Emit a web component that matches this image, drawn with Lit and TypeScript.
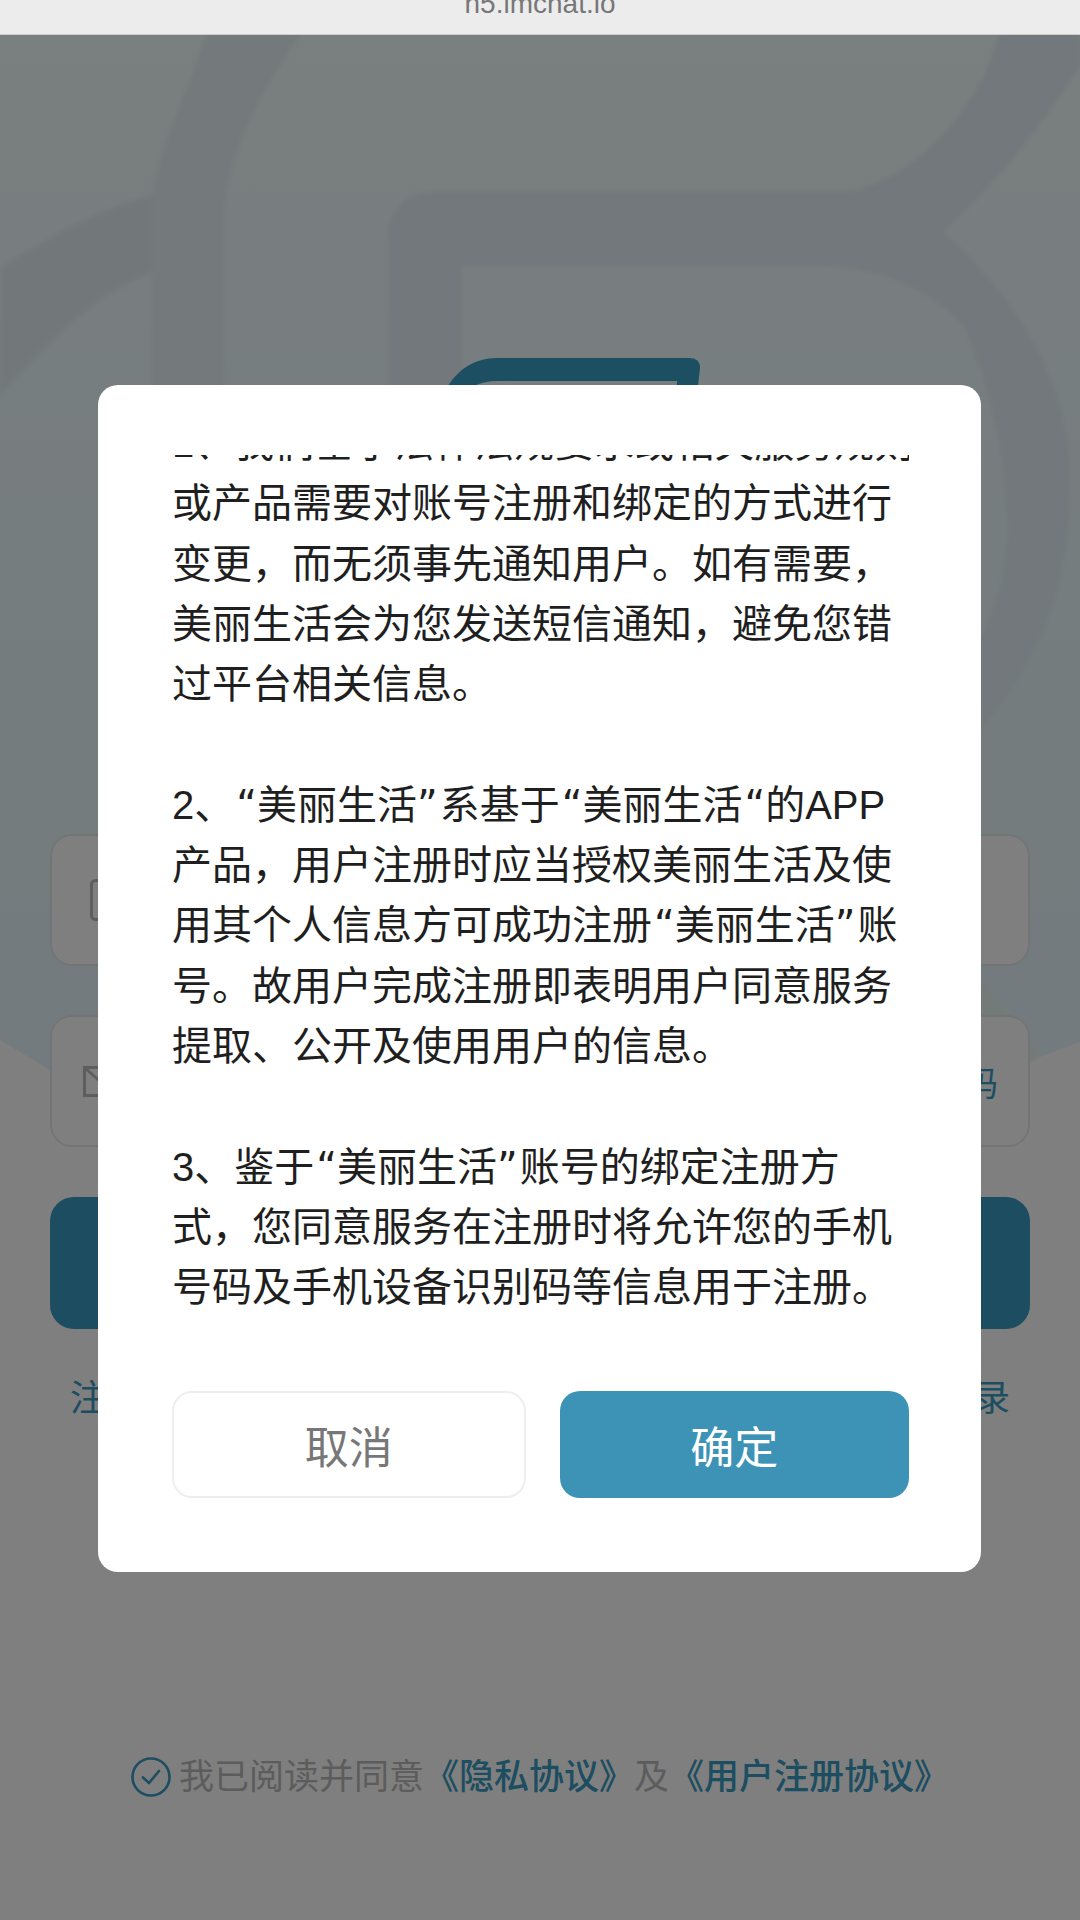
import { LitElement, html, css, svg } from "lit";
import { customElement } from "lit/decorators.js";

@customElement("app-root")
export class AppRoot extends LitElement {
  static styles = css`
    :host { display: block; font-family: "Liberation Sans", "Noto Sans CJK SC", sans-serif; }
    * { box-sizing: border-box; }
    .page { position: relative; width: 1080px; height: 1920px; overflow: hidden; background: #fff; }
    .bg { position: absolute; left: 0; top: 0; width: 1080px; height: 1920px; z-index: 0; }
    .bar { position: relative; z-index: 3; height: 35px; background: #ececec; border-bottom: 1px solid #c9cdcd; overflow: hidden; text-align: center; }
    .bar span { display: block; margin-top: -10px; font-size: 28px; line-height: 28px; color: #777; }
    .main { position: relative; z-index: 1; padding: 799px 50px 0; display: flex; flex-direction: column; }
    .field { height: 132px; background: #fff; border: 2px solid #e6eaea; border-radius: 22px; display: flex; align-items: center; padding: 0 30px 0 31px; gap: 20px; }
    .field + .field { margin-top: 49px; }
    .icon { width: 38px; display: flex; justify-content: center; flex: none; }
    .ph { flex: 1; font-size: 34px; color: #bbb; }
    .code { font-size: 34px; color: #3a9ac0; }
    .submit { margin-top: 50px; height: 132px; border-radius: 24px; background: #3a9ac0; color: #fff; font-size: 40px; display: flex; align-items: center; justify-content: center; }
    .links { margin-top: 48px; padding: 0 20px; display: flex; justify-content: space-between; font-size: 36px; line-height: 44px; color: #3a9ac0; }
    .agree { margin-top: 334px; display: flex; align-items: center; justify-content: center; gap: 8px; font-size: 35px; line-height: 44px; color: #b9b9b9; white-space: nowrap; }
    .agree b { font-weight: 500; color: #3a9ac0; }
    .agree svg { flex: none; }
    .overlay { position: absolute; z-index: 2; left: 0; right: 0; top: 35px; bottom: 0; background: rgba(0, 0, 0, 0.5); padding: 350px 99px 0 98px; }
    .dialog { height: 1187px; background: #fff; border-radius: 20px; padding: 70px 72px 74px 74px; display: flex; flex-direction: column; }
    .scroll { flex: 1; overflow: hidden; }
    .text { margin-top: -42px; font-size: 40px; line-height: 60.3px; color: #1f1f1f; white-space: nowrap; }
    .text p { margin: 0 0 60.3px; }
    .qo, .qc { font-family: "DejaVu Sans", sans-serif; }
    .qo { padding-left: 2px; }
    .qc { padding-right: 2px; }
    .btns { display: flex; gap: 34px; }
    .btn { flex: 1; height: 107px; border-radius: 20px; font-size: 44px; display: flex; align-items: center; justify-content: center; }
    .cancel { border: 2px solid #eeeeee; color: #777; background: #fff; }
    .ok { background: #3d93b6; color: #fff; }
  `;

  private background() {
    return svg`
      <defs>
        <linearGradient id="base" x1="0" y1="0" x2="0" y2="1">
          <stop offset="0" stop-color="#f4ffff" />
          <stop offset="1" stop-color="#e6f6fc" />
        </linearGradient>
        <filter id="soft" x="-5%" y="-5%" width="110%" height="110%"><feGaussianBlur stdDeviation="2.5" /></filter>
      </defs>
      <path d="M0 0H1080V1042L1040 1057L980 1085H100L50 1070L0 1040Z" fill="url(#base)" />
      <g filter="url(#soft)">
        <path d="M207 30C190 90 160 140 152 200V1085H224V220C224 150 270 80 303 30Z" fill="#e8f2f7" />
        <path d="M0 268C50 235 100 209 152 195V273C100 290 50 340 0 395Z" fill="#e5f0f5" />
        <path d="M389 1085V240Q389 192 437 192H847C920 180 985 100 1000 30H1080V65C1045 120 1000 180 943 232C1030 310 1072 400 1070 486C1068 590 1040 660 980 730L900 800V600L980 640C1000 600 1010 560 1007 521C1005 440 985 370 964 326C930 285 870 265 812 265H461V1085Z" fill="#e4f1f6" />
        <path d="M980 976L1040 1057L980 1085Z" fill="#e6f6f2" />
      </g>
      <path d="M448 386C458 370 474 358 497 358H690Q700 358 700 368L698 386H677V381H497Q485 381 474 386Z" fill="#3a9ec6" />
    `;
  }

  render() {
    const o = html`<span class="qo">“</span>`;
    const c = html`<span class="qc">”</span>`;
    return html`
      <div class="page">
        <svg class="bg" viewBox="0 0 1080 1920">${this.background()}</svg>
        <div class="bar"><span>h5.imchat.io</span></div>
        <div class="main">
          <div class="field">
            <div class="icon">
              <svg width="24" height="42" viewBox="0 0 24 42" fill="none" stroke="#bdbdbd" stroke-width="3"><rect x="1.5" y="1.5" width="21" height="39" rx="4" /><path d="M9 34h6" /></svg>
            </div>
            <span class="ph">请输入手机号</span>
          </div>
          <div class="field">
            <div class="icon">
              <svg width="38" height="31" viewBox="0 0 38 31" fill="none" stroke="#bdbdbd" stroke-width="3"><rect x="1.5" y="1.5" width="35" height="28" /><path d="M2 2L19 17L36 2" /></svg>
            </div>
            <span class="ph">请输入验证码</span>
            <span class="code">获取验证码</span>
          </div>
          <div class="submit">登录</div>
          <div class="links"><span>注册</span><span>账号密码登录</span></div>
          <div class="agree">
            <svg width="40" height="40" viewBox="0 0 40 40" fill="none" stroke="#3a9ac0" stroke-width="2.6" stroke-linecap="round" stroke-linejoin="round"><circle cx="20" cy="20" r="18.5" /><path d="M12 20.5L18 26L28 14" /></svg>
            <span>我已阅读并同意<b>《隐私协议》</b>及<b>《用户注册协议》</b></span>
          </div>
        </div>
        <div class="overlay">
          <div class="dialog">
            <div class="scroll">
              <div class="text">
                <p>1、我们基于法律法规要求或相关服务规则，<br />或产品需要对账号注册和绑定的方式进行<br />变更，而无须事先通知用户。如有需要，<br />美丽生活会为您发送短信通知，避免您错<br />过平台相关信息。</p>
                <p>2、${o}美丽生活${c}系基于${o}美丽生活${o}的APP<br />产品，用户注册时应当授权美丽生活及使<br />用其个人信息方可成功注册${o}美丽生活${c}账<br />号。故用户完成注册即表明用户同意服务<br />提取、公开及使用用户的信息。</p>
                <p>3、鉴于${o}美丽生活${c}账号的绑定注册方<br />式，您同意服务在注册时将允许您的手机<br />号码及手机设备识别码等信息用于注册。</p>
              </div>
            </div>
            <div class="btns">
              <div class="btn cancel">取消</div>
              <div class="btn ok">确定</div>
            </div>
          </div>
        </div>
      </div>
    `;
  }
}
